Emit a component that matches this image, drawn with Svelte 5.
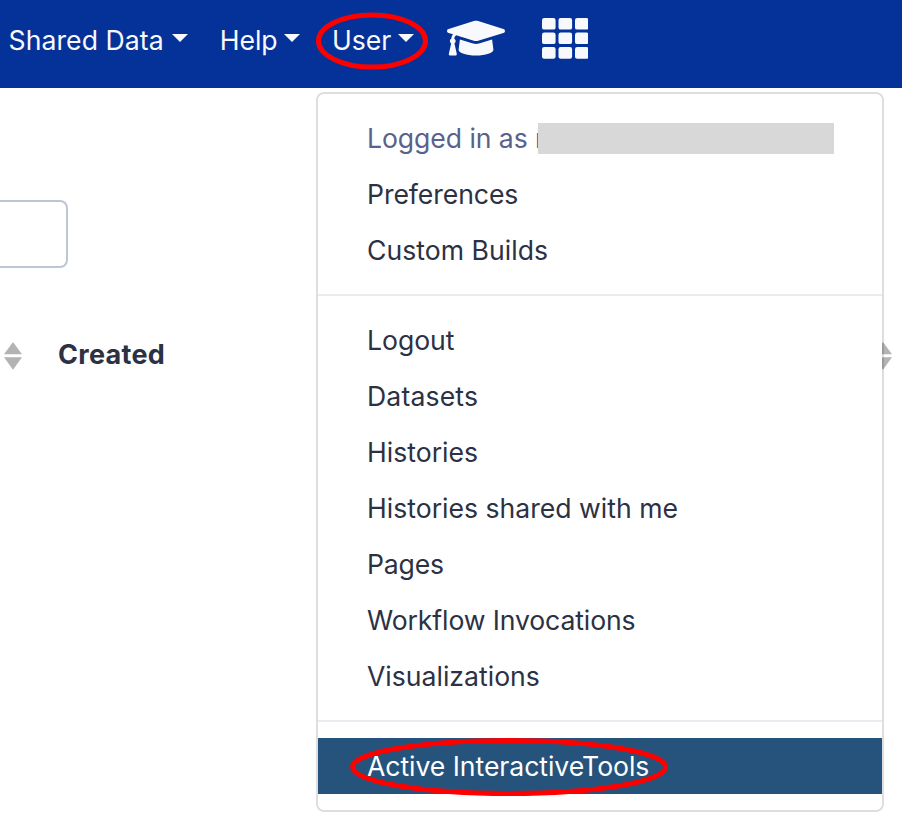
<script>
  const nav = [
    { label: 'Shared Data', spacing: 0.07, gap: 8 },
    { label: 'Help', spacing: -0.05, gap: 6.5 },
    { label: 'User', spacing: 0, gap: 6.5, marked: true }
  ];
  const groups = [
    [
      { label: 'Logged in as n', muted: true, spacing: -0.07 },
      { label: 'Preferences', spacing: -0.08 },
      { label: 'Custom Builds', spacing: 0.03 }
    ],
    [
      { label: 'Logout', spacing: -0.05 },
      { label: 'Datasets', spacing: 0.15 },
      { label: 'Histories', spacing: 0 },
      { label: 'Histories shared with me', spacing: 0 },
      { label: 'Pages', spacing: -0.2 },
      { label: 'Workflow Invocations', spacing: -0.12 },
      { label: 'Visualizations', spacing: 0 }
    ],
    [{ label: 'Active InteractiveTools', active: true, spacing: -0.05 }]
  ];
  const cells = [0, 1, 2];
</script>

{#snippet sorter()}
  <svg class="sorter" width="18" height="28" viewBox="0 0 18 28">
    <path d="M9 0L18 12.3H0zM0 15.2H18L9 27.8z" />
  </svg>
{/snippet}

<div class="page">
  <header>
    <nav>
      {#each nav as item}
        <a class="link" href="#top" style:gap="{item.gap}px">
          <span style:letter-spacing="{item.spacing}px">{item.label}</span><i class="caret"></i>
          {#if item.marked}
            <svg class="ring" width="112" height="58" viewBox="0 0 112 58">
              <ellipse cx="56" cy="29" rx="53.5" ry="26" />
            </svg>
          {/if}
        </a>
      {/each}
    </nav>
    <svg class="cap" width="58" height="46.4" viewBox="0 0 640 512">
      <path d="M622.34 153.2L343.4 67.5c-15.2-4.67-31.6-4.67-46.79 0L17.66 153.2c-23.54 7.23-23.54 38.36 0 45.59l48.63 14.94c-10.67 13.19-17.23 29.28-17.88 46.9C38.78 266.15 32 276.11 32 288c0 10.78 5.68 19.85 13.86 25.65L20.33 428.53C18.11 438.52 25.71 448 35.94 448h56.11c10.24 0 17.84-9.48 15.62-19.47L82.14 313.65C90.32 307.85 96 298.78 96 288c0-11.57-6.47-21.25-15.66-26.87.76-15.02 8.44-28.3 20.69-36.72L296.6 284.5c9.06 2.78 26.44 6.25 46.79 0l278.95-85.7c23.55-7.24 23.55-38.36 0-45.6zM352.79 315.09c-28.53 8.76-52.84 3.92-65.59 0l-145.02-44.55L128 384c0 35.35 85.96 64 192 64s192-28.65 192-64l-14.18-113.47-145.03 44.56z" />
    </svg>
    <svg class="grid" width="46.6" height="46.6" viewBox="0 0 512 512">
      {#each cells as r}
        {#each cells as c}
          <rect x={c * 181.33} y={32 + r * 160} width="149.33" height="128" rx="24" />
        {/each}
      {/each}
    </svg>
  </header>

  <main>
    <div class="field"></div>
    <div class="columns">
      {@render sorter()}
      <b>Created</b>
      {@render sorter()}
    </div>
  </main>

  <div class="menu">
    {#each groups as group, g}
      {#if g > 0}<hr />{/if}
      {#each group as item}
        <div class="item" class:muted={item.muted} class:active={item.active}>
          <span style:letter-spacing="{item.spacing}px">{item.label}</span>
          {#if item.muted}<div class="redacted"></div>{/if}
          {#if item.active}
            <svg class="oval" width="318" height="58" viewBox="0 0 318 58">
              <ellipse cx="159" cy="29" rx="156.5" ry="26.5" />
            </svg>
          {/if}
        </div>
      {/each}
    {/each}
  </div>
</div>

<style>
  .page {
    position: relative;
    width: 902px;
    height: 828px;
    overflow: hidden;
    background: #fff;
    color: #2c3143;
    font: 26.6px/40px Inter, "Liberation Sans", sans-serif;
  }
  header {
    display: flex;
    align-items: flex-start;
    height: 88px;
    box-sizing: border-box;
    padding-left: 8.5px;
    background: #053299;
  }
  nav {
    display: flex;
    gap: 32px;
    padding-top: 20px;
  }
  .link {
    position: relative;
    display: flex;
    color: #f8f9fc;
    text-decoration: none;
    white-space: nowrap;
  }
  .caret {
    margin-top: 14px;
    width: 0;
    height: 0;
    border: 8px solid transparent;
    border-top-color: #f8f9fc;
    border-bottom: 0;
  }
  .ring {
    position: absolute;
    left: -16px;
    top: -8.5px;
  }
  ellipse {
    fill: none;
    stroke: #f00;
    stroke-width: 5;
  }
  .cap {
    margin: 15px 0 0 33px;
    fill: #f8f9fc;
  }
  .grid {
    margin: 15px 0 0 37px;
    fill: #f8f9fc;
  }
  .field {
    width: 68px;
    height: 68px;
    box-sizing: border-box;
    margin-top: 112px;
    border: 2px solid #bdc6d3;
    border-left: 0;
    border-radius: 0 8px 8px 0;
  }
  .columns {
    display: flex;
    align-items: center;
    margin-top: 68px;
    padding: 0 10px 0 4px;
    height: 40px;
  }
  .columns b {
    flex: 1;
    margin: 0 0 2px 36px;
    font-size: 27px;
    font-weight: 700;
    letter-spacing: 0.3px;
  }
  .sorter {
    fill: #b3b3b3;
  }
  .menu {
    position: absolute;
    left: 316px;
    top: 92px;
    width: 568px;
    height: 720px;
    box-sizing: border-box;
    padding: 16px 0;
    border: 2px solid rgba(0, 0, 0, 0.13);
    border-radius: 8px;
    background: #fff;
    background-clip: padding-box;
  }
  .item {
    position: relative;
    display: flex;
    align-items: center;
    height: 56px;
    padding-left: 49px;
    white-space: nowrap;
  }
  .muted {
    color: #58628a;
  }
  .active {
    background: #25537b;
    color: #fff;
  }
  .redacted {
    position: absolute;
    left: 220px;
    top: 13px;
    width: 296px;
    height: 31px;
    background: #d8d8d8;
  }
  .oval {
    position: absolute;
    left: 32px;
    top: 0;
  }
  hr {
    height: 2px;
    margin: 16px 0;
    border: 0;
    background: #e8ebef;
  }
</style>
